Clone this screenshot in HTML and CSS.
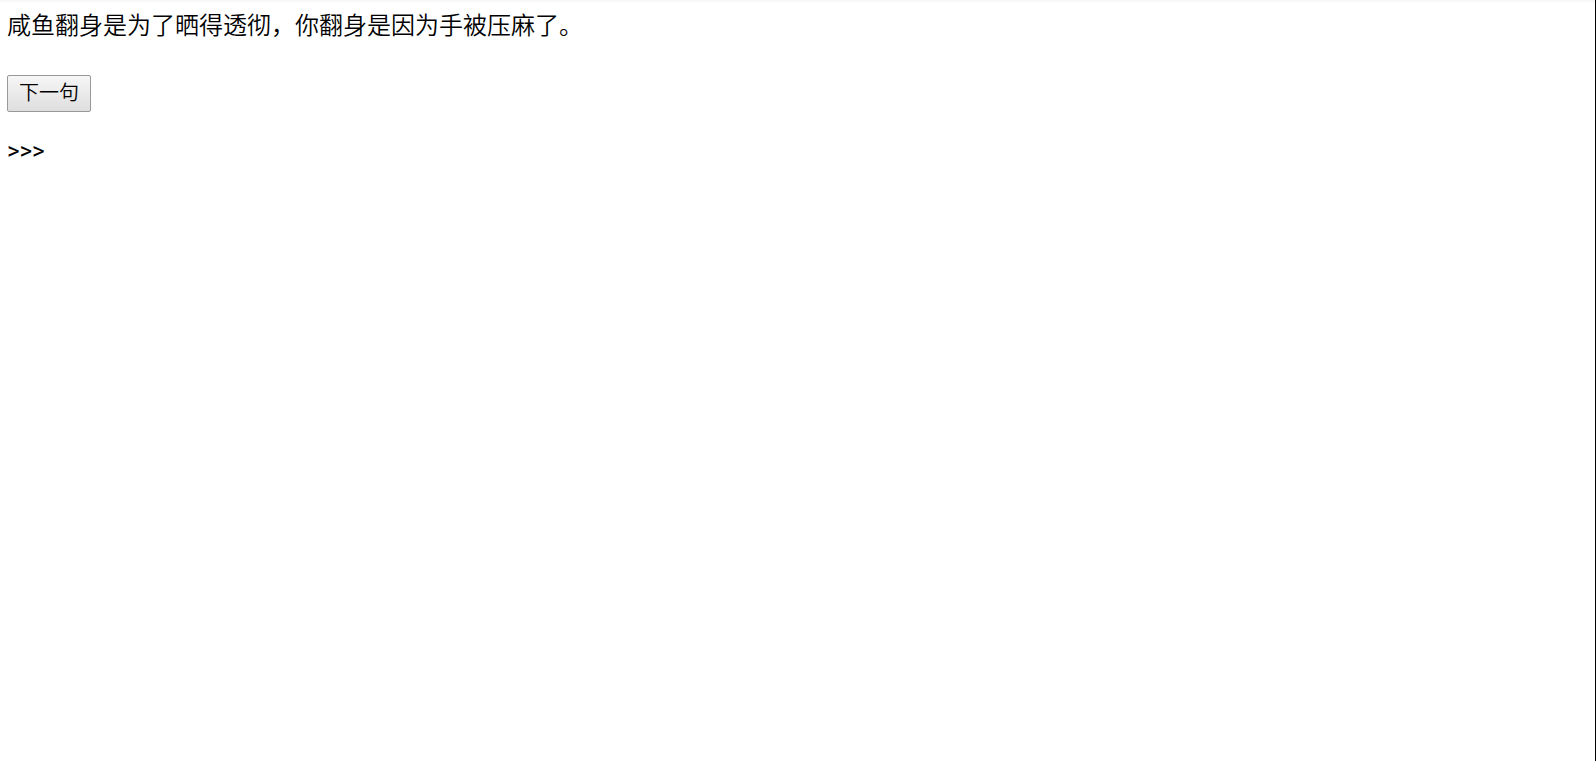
FILE: index.html
```html
<!DOCTYPE html>
<html lang="zh-CN">
<head>
  <meta charset="UTF-8" />
  <title>下一句</title>
  <link rel="stylesheet" href="styles.css">
</head>
<body>

<p class="sentence">咸鱼翻身是为了晒得透彻，你翻身是因为手被压麻了。</p>

<button type="button" class="next">下一句</button>

<p class="prompt">&gt;&gt;&gt;</p>

</body>
</html>
```
FILE: styles.css
```css
* {
  box-sizing: border-box;
}
body {
  margin: 0;
  min-height: 100vh;
  padding: 6px 7px;
  border-right: 1px solid #000;
  background: linear-gradient(#f7f7f7, #f7f7f7) top / 100% 2px no-repeat #fff;
  color: #000;
  font-family: Roboto, "Noto Sans CJK SC", sans-serif;
  font-size: 24px;
  line-height: 40px;
}
p {
  margin: 0;
}
.sentence, .next {
  font-weight: 350;
}
.next {
  display: block;
  margin: 29px 0 19px;
  padding: 0 11px 1px;
  height: 37px;
  border: 1px solid #999;
  border-radius: 2px;
  background: linear-gradient(#f6f6f6, #dedede);
  color: #000;
  font-family: inherit;
  font-size: 20px;
  line-height: 32px;
}
```
